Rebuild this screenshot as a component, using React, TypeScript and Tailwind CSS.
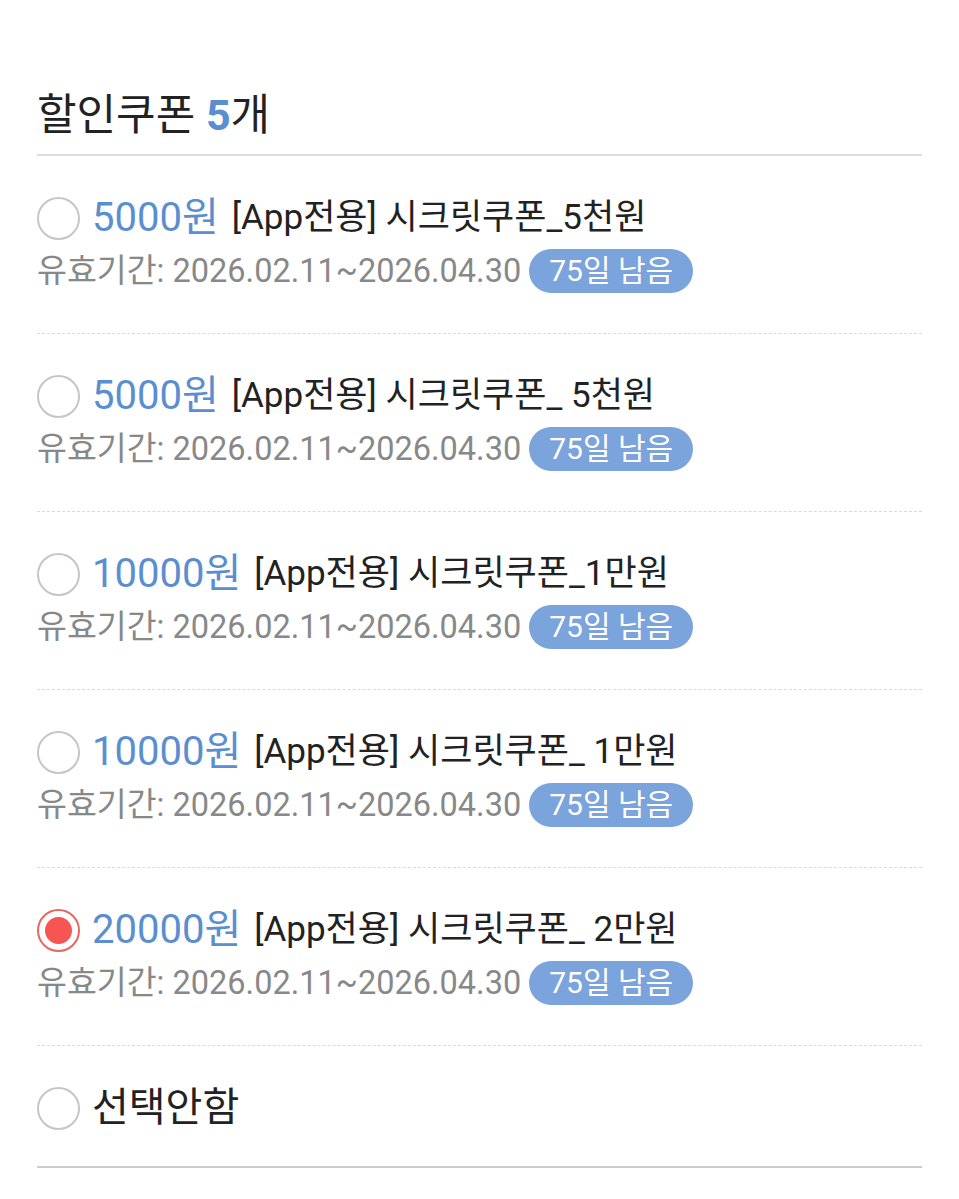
import React from "react";

const coupons = [
  { amount: "5000원", name: "[App전용] 시크릿쿠폰_5천원", selected: false },
  { amount: "5000원", name: "[App전용] 시크릿쿠폰_ 5천원", selected: false },
  { amount: "10000원", name: "[App전용] 시크릿쿠폰_1만원", selected: false },
  { amount: "10000원", name: "[App전용] 시크릿쿠폰_ 1만원", selected: false },
  { amount: "20000원", name: "[App전용] 시크릿쿠폰_ 2만원", selected: true },
];

function Radio({ selected }: { selected: boolean }) {
  return selected ? (
    <span className="flex h-[43px] w-[43px] shrink-0 items-center justify-center rounded-full border-2 border-[#e06a66] bg-white">
      <span className="h-[27px] w-[27px] rounded-full bg-[#f65552]" />
    </span>
  ) : (
    <span className="h-[43px] w-[43px] shrink-0 rounded-full border-2 border-[#c6c6c6] bg-white" />
  );
}

export default function App() {
  return (
    <div
      className="min-h-[1199px] w-full bg-white px-[37px]"
      style={{ fontFamily: 'Roboto, "Noto Sans CJK KR", sans-serif' }}
    >
      <div className="border-b-2 border-[#dcdcdc] pt-[86px] pb-[10px]">
        <h1 className="h-[58px] text-[43px] leading-[58px] font-normal text-[#222]">
          할인쿠폰 <span className="font-bold text-[#5b8ed0]">5</span>개
        </h1>
      </div>
      {coupons.map((c, i) => (
        <div key={i} className="border-b border-dashed border-[#dadada] pt-[40px] pb-[40px]">
          <div className="flex h-[44px] items-center">
            <Radio selected={c.selected} />
            <span className="ml-[12px] text-[40px] leading-[44px] text-[#5b8ed0]">{c.amount}</span>
            <span className="ml-[13px] text-[35px] leading-[44px] text-[#222]">{c.name}</span>
          </div>
          <div className="mt-[9px] flex h-[44px] items-center">
            <span className="text-[32.5px] leading-[44px] text-[#888]">유효기간: 2026.02.11~2026.04.30</span>
            <span className="ml-[8px] flex h-[44px] items-center rounded-full bg-[#7ba3dc] px-[20px] text-[30px] leading-[44px] text-white">
              75일 남음
            </span>
          </div>
        </div>
      ))}
      <div className="border-b-2 border-[#cccccc] pt-[40px] pb-[36px]">
        <div className="flex h-[44px] items-center">
          <Radio selected={false} />
          <span className="ml-[12px] text-[40px] leading-[44px] text-[#222]">선택안함</span>
        </div>
      </div>
    </div>
  );
}
